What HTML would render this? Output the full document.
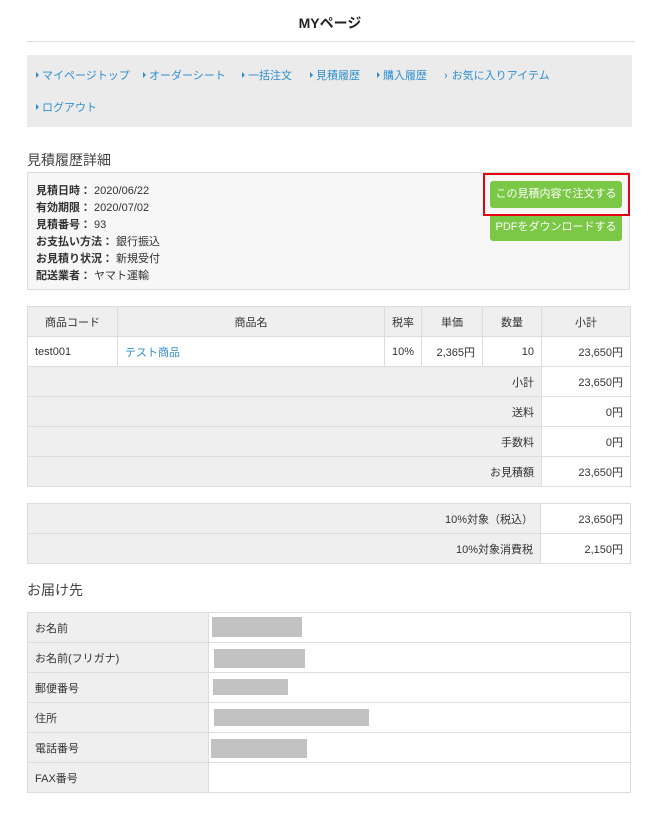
<!DOCTYPE html>
<html><head><meta charset="utf-8"><style>
*{margin:0;padding:0;box-sizing:border-box}
body{width:660px;height:823px;background:#fff;font-family:"Liberation Sans","Noto Sans CJK JP",sans-serif;color:#333;font-size:11px;position:relative;overflow:hidden}
.abs{position:absolute}
h1{position:absolute;left:0;width:660px;top:13px;text-align:center;font-size:14px;font-weight:bold;color:#222}
.rule{left:27px;top:41px;width:608px;height:1px;background:#ddd}
.nav{left:27px;top:55px;width:605px;height:72px;background:#ebebeb}
.nav span{position:absolute;color:#2e8fd0;font-size:11px;white-space:nowrap}
.nav span:before{content:"";display:inline-block;width:0;height:0;border-left:3px solid #2e8fd0;border-top:3px solid transparent;border-bottom:3px solid transparent;margin-right:3px;vertical-align:1px}
.nav span.g:before{content:"›";border:none;width:auto;height:auto;margin-right:4px;vertical-align:0}
.h2{font-size:14px;color:#444}
.info{left:27px;top:172px;width:603px;height:118px;background:#f7f7f7;border:1px solid #ddd}
.info div{position:absolute;left:8px;font-size:11px;color:#333}
.info b{font-weight:bold}
.btn{position:absolute;left:490px;width:132px;height:27px;background:#7bc846;color:#fff;border-radius:3px;font-size:11px;text-align:center;line-height:27px}
.red{left:483px;top:173px;width:147px;height:43px;border:2px solid #e60012}
table{position:absolute;border-collapse:collapse;font-size:11px;color:#333}
td,th{border:1px solid #ddd;height:30px;padding:0 7px;font-weight:normal}
th{background:#efefef}
.g1{background:#efefef}
.r{text-align:right}
a{color:#2e8fd0;text-decoration:none}
.blk{position:absolute;background:#c2c2c2}
</style></head><body>
<h1>MYページ</h1>
<div class="abs rule"></div>
<div class="abs nav">
<span style="left:9px;top:12px">マイページトップ</span>
<span style="left:116px;top:12px">オーダーシート</span>
<span style="left:215px;top:12px">一括注文</span>
<span style="left:283px;top:12px">見積履歴</span>
<span style="left:350px;top:12px">購入履歴</span>
<span class="g" style="left:417px;top:12px">お気に入りアイテム</span>
<span style="left:9px;top:44px">ログアウト</span>
</div>
<div class="abs h2" style="left:27px;top:150px">見積履歴詳細</div>
<div class="abs info">
<div style="top:9px"><b>見積日時：</b> 2020/06/22</div>
<div style="top:26px"><b>有効期限：</b> 2020/07/02</div>
<div style="top:43px"><b>見積番号：</b> 93</div>
<div style="top:60px"><b>お支払い方法：</b> 銀行振込</div>
<div style="top:77px"><b>お見積り状況：</b> 新規受付</div>
<div style="top:94px"><b>配送業者：</b> ヤマト運輸</div>
</div>
<div class="btn" style="top:181px">この見積内容で注文する</div>
<div class="btn" style="top:214px">PDFをダウンロードする</div>
<div class="abs red"></div>

<table style="left:27px;top:306px;width:604px">
<tr><th style="width:90px">商品コード</th><th style="width:267px">商品名</th><th style="width:37px">税率</th><th style="width:61px">単価</th><th style="width:59px">数量</th><th>小計</th></tr>
<tr><td>test001</td><td><a>テスト商品</a></td><td>10%</td><td class="r">2,365円</td><td class="r">10</td><td class="r">23,650円</td></tr>
<tr><td colspan="5" class="g1 r">小計</td><td class="r">23,650円</td></tr>
<tr><td colspan="5" class="g1 r">送料</td><td class="r">0円</td></tr>
<tr><td colspan="5" class="g1 r">手数料</td><td class="r">0円</td></tr>
<tr><td colspan="5" class="g1 r">お見積額</td><td class="r">23,650円</td></tr>
</table>

<table style="left:27px;top:503px;width:604px">
<tr><td class="g1 r">10%対象（税込）</td><td class="r" style="width:90px">23,650円</td></tr>
<tr><td class="g1 r">10%対象消費税</td><td class="r">2,150円</td></tr>
</table>

<div class="abs h2" style="left:27px;top:580px">お届け先</div>
<table style="left:27px;top:612px;width:604px">
<tr><td class="g1" style="width:181px">お名前</td><td></td></tr>
<tr><td class="g1">お名前(フリガナ)</td><td></td></tr>
<tr><td class="g1">郵便番号</td><td></td></tr>
<tr><td class="g1">住所</td><td></td></tr>
<tr><td class="g1">電話番号</td><td></td></tr>
<tr><td class="g1">FAX番号</td><td></td></tr>
</table>
<div class="blk" style="left:212px;top:617px;width:90px;height:20px"></div>
<div class="blk" style="left:214px;top:649px;width:91px;height:19px"></div>
<div class="blk" style="left:213px;top:679px;width:75px;height:16px"></div>
<div class="blk" style="left:214px;top:709px;width:155px;height:17px"></div>
<div class="blk" style="left:211px;top:739px;width:96px;height:19px"></div>
</body></html>
